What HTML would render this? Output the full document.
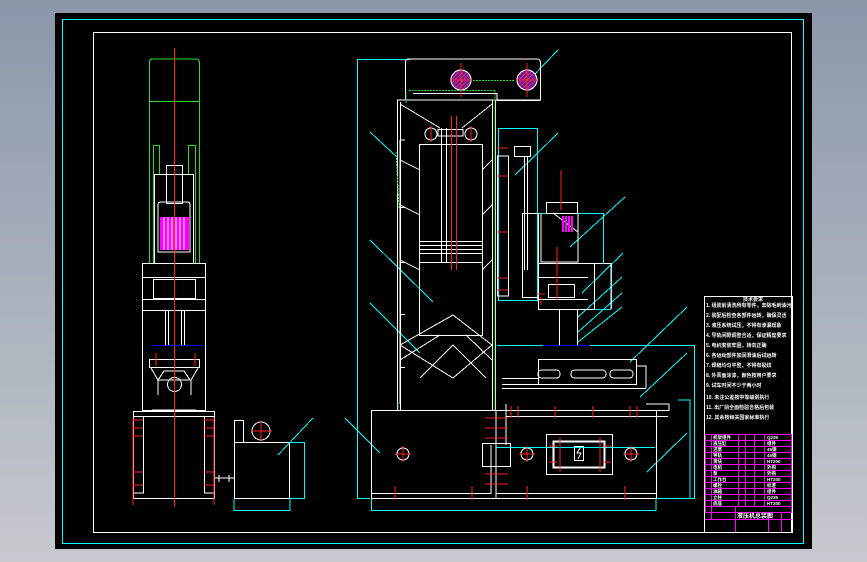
<!DOCTYPE html>
<html><head><meta charset="utf-8"><style>
html,body{margin:0;padding:0;width:867px;height:562px;overflow:hidden;background:linear-gradient(#8a97aa,#c6c9ce);}
svg{position:absolute;left:0;top:0}
</style></head><body>
<svg width="867" height="562" viewBox="0 0 867 562" xmlns="http://www.w3.org/2000/svg" fill="none" stroke-width="1" shape-rendering="crispEdges">
<defs>
<pattern id="h" width="3" height="3" patternUnits="userSpaceOnUse" patternTransform="rotate(45)">
<rect width="3" height="3" fill="#a000a0"/><path d="M0 0 V3" stroke="#30c030" stroke-width="1"/>
</pattern>
</defs>
<rect x="55" y="13" width="757" height="536" fill="#000"/>
<rect x="62.5" y="19.5" width="741" height="524" stroke="#00ffff"/>
<rect x="93.5" y="32.5" width="698" height="500" stroke="#fff"/>

<!-- LEFT VIEW -->
<g stroke="#22dd22">
<path d="M149.5 263 V62 Q149.5 59 153 59 H196 Q199.5 59 199.5 63 V263"/>
<path d="M149 101.5 H199"/>
<path d="M153.5 263 V145.5 H159.5 V175 M188.5 175 V145.5 H195.5 V263"/>
</g>
<g stroke="#fff">
<path d="M174.5 101 V143"/>
<rect x="154.5" y="174.5" width="39" height="89"/>
<rect x="166.5" y="165.5" width="16" height="38"/>
<path d="M158 216 V205 Q158 202 161 202 H187 Q190 202 190 205 V252 H158 Z"/>
<rect x="142.5" y="263.5" width="63" height="147"/>
<path d="M142 277.5 H205 M142 299.5 H205 M142 310.5 H205"/>
<rect x="153.5" y="279.5" width="42" height="19"/>
<path d="M165.5 311 V346 M168.5 311 V346 M181.5 311 V346 M184.5 311 V346"/>
<rect x="149.5" y="359.5" width="50" height="8"/>
<path d="M151 368 L158 380 V395 M198 368 L191 380 V395 M152 410 H196 M164 371 H184 L190 380 H158 Z"/>
<circle cx="174.5" cy="384.5" r="7"/>
<rect x="133.5" y="411.5" width="81" height="87"/>
<path d="M133 416.5 H214 M143.5 416 V493 H133 M204.5 416 V493 H214"/>
<rect x="234.5" y="442.5" width="55" height="56"/>
<rect x="234.5" y="420.5" width="9" height="22"/>
<circle cx="261" cy="431" r="9"/>
<path d="M215 478 H234 M219 475 V482 M229 475 V482"/>
</g>
<rect x="160" y="217" width="29" height="33" fill="#ff00ff"/>
<path d="M164 217 V250 M168 217 V250 M172 217 V250 M176 217 V250 M180 217 V250 M184 217 V250" stroke="#fff"/>
<g stroke="#ff2020">
<path d="M174.5 48 V507"/>
<path d="M252 431 H272 M261 421 V441 M133 418 V505 M214 418 V505 M156 353 V366 M195 353 V366"/>
<path d="M133 420 H143 M133 428 H143 M133 436 H143 M133 472 H143 M133 485 H143 M204 420 H214 M204 428 H214 M204 436 H214 M204 472 H214 M204 485 H214"/>
</g>
<path d="M152 345.5 H202" stroke="#0000ff"/>
<g stroke="#00ffff">
<path d="M234 498.5 V510.5 H290 V498 M290 442.5 H304.5 V498.5 H290 M278 455 L313 418"/>
</g>

<!-- RIGHT VIEW -->
<g stroke="#00ffff">
<path d="M357.5 59 V498 M357 59.5 H410 M357 498.5 H370"/>
<path d="M371.5 498 V510.5 H656 V498"/>
<rect x="498.5" y="128.5" width="39" height="172"/>
<path d="M538 213.5 H603.5 V263 M538 263.5 H611.5 V309 M555 309.5 H611"/>
<path d="M497 345.5 H694.5 V498.5 H656 M678 400 H690 V498"/>
<path d="M496 447.5 H655"/>
<path d="M558 50 L532 77 M558 133 L515 175 M625 197 L570 247 M623 253 L582 293 M622 277 L578 317 M622 293 L578 332 M622 307 L578 342 M687 307 L630 362 M687 353 L640 397 M687 433 L647 472 M345 418 L380 453 M370 240 L433 302 M370 303 L420 353 M370 132 L398 158"/>
</g>
<g stroke="#fff">
<path d="M405.5 100 V62 Q405.5 59 409 59 H537 Q540.5 59 540.5 63 V100 H405"/>
<path d="M413 93.5 H497 V100"/>
<path d="M397.5 410 V100 H407 M400.5 410 V102 M492.5 410 V100 M495.5 410 V100"/>
<path d="M497 100.5 H540"/>
<rect x="419.5" y="144.5" width="63" height="191"/>
<path d="M419 241.5 H483 M419 245.5 H483 M419 249.5 H483 M419 253.5 H483 M419 262.5 H483"/>
<path d="M441.5 128 V262 M446.5 128 V262 M438 129.5 H463 V136 H438 Z"/>
<circle cx="431" cy="134" r="6"/>
<circle cx="471" cy="134" r="6"/>
<path d="M400 104 L440 128 M492 104 L462 128 M400 160 L420 170 M492 160 L482 170 M400 205 L420 215 M492 205 L482 215 M400 260 L420 270 M492 260 L482 270 M400 345 L453 315 L492 345 L453 378 Z M420 378 L453 345 L486 378 M400 360 L440 335 M492 360 L466 335"/>
<path d="M400 140 V404 M400 140 H405 M400 207.5 H405 M400 262.5 H405 M400 314.5 H405 M400 367.5 H405"/>
<rect x="497.5" y="156" width="11" height="140"/>
<rect x="514.5" y="146.5" width="16" height="10"/>
<path d="M524.5 157 V270 M527.5 157 V270"/>
<rect x="522.5" y="213.5" width="16" height="84"/>
<rect x="546.5" y="202.5" width="31" height="11"/>
<path d="M541 213.5 V262 H578 V213 M553 213 L578 232"/>
<rect x="538.5" y="263.5" width="56" height="46"/>
<path d="M538 277.5 H588 M538 299.5 H588 M594 263.5 H611 V309"/>
<rect x="548.5" y="284.5" width="26" height="13"/>
<path d="M559.5 310 V345 M577.5 310 V345"/>
<rect x="538.5" y="359.5" width="98" height="25"/>
<path d="M502 378.5 H538 M502 384.5 H538 M502 388.5 H646 M506 410.5 H669 V404 H646 M506 416.5 H668 M506 404 V445 M636 366 H646 V388"/>
<rect x="371.5" y="410.5" width="285" height="88"/>
<path d="M371 493.5 H491 V445 M496 493.5 H656 M496 410 V498"/>
<rect x="482.5" y="443.5" width="28" height="23"/>
<rect x="546.5" y="434.5" width="66" height="40"/>
<rect x="553.5" y="441.5" width="51" height="26" stroke-width="2"/>
<rect x="574.5" y="446.5" width="9" height="14"/>
<path d="M580 448 L577 453 H581 L578 459"/>
<circle cx="403" cy="454" r="6"/>
<circle cx="527" cy="454" r="6"/>
<circle cx="631" cy="454" r="6"/>
<path d="M542 370 H556 Q560 370 560 374 Q560 378 556 378 H542 Q538 378 538 374 Q538 370 542 370 Z M575 370 H602 Q606 370 606 374 Q606 378 602 378 H575 Q571 378 571 374 Q571 370 575 370 Z M614 370 H629 Q633 370 633 374 Q633 378 629 378 H614 Q610 378 610 374 Q610 370 614 370 Z"/>
</g>
<g stroke="#22dd22" stroke-dasharray="2 1">
<path d="M406 92 V103 M409 90.5 H495 M495 90.5 V410 M473 80.5 H515 M396 152 L399 208 M398 403 V410"/>
</g>
<g fill="url(#h)" stroke="#fff">
<circle cx="461" cy="80" r="10"/>
<circle cx="527" cy="80" r="10"/>
</g>
<path d="M563 216 V232 M566 216 V232 M569 216 V232 M572 216 V232" stroke="#ff00ff" stroke-width="2"/>
<g stroke="#ff2020">
<path d="M461 63 V97 M451 80 H471 M527 63 V97 M517 80 H537 M451.5 116 V270 M456.5 116 V270 M431 126 V142 M471 126 V142 M561 170 V210 M557 247 V300"/>
<path d="M395 454 H411 M403 446 V462 M519 454 H535 M527 446 V462 M623 454 H639 M631 446 V462"/>
<path d="M511 406 V418 M518 406 V418 M555 406 V418 M593 406 V418 M630 406 V418 M637 406 V418"/>
<path d="M485 418 H508 M485 428 H508 M485 438 H508 M485 474 H508 M485 484 H508 M560 437 V472 M600 437 V472 M549 446 H557 M549 462 H557 M603 446 H611 M603 462 H611"/>
<path d="M395 486 V500 M472 486 V500 M527 486 V500 M625 486 V500 M541 297 V305 M538 294 H545"/>
<path d="M497 148 H508 M497 176 H508 M497 232 H508 M497 278 H508 M497 290 H508"/>
</g>
<path d="M543 345.5 H590" stroke="#0000ff"/>

<!-- notes / title block -->
<rect x="704.5" y="296.5" width="88" height="236" stroke="#fff"/>
<g fill="#fff" font-family="'Liberation Sans','Noto Sans CJK SC',sans-serif" font-size="5" font-weight="bold">
<text x="743" y="301">技术要求</text>
<text x="706" y="307">1. 组装前清洗所有零件，去除毛刺油污</text>
<text x="706" y="317">2. 装配后检查各部件运转，确保灵活</text>
<text x="706" y="327">3. 液压系统试压，不得有渗漏现象</text>
<text x="706" y="337">4. 导轨间隙调整合适，保证精度要求</text>
<text x="706" y="347">5. 电机安装牢固，转向正确</text>
<text x="706" y="357">6. 各运动部件加润滑油后试运转</text>
<text x="706" y="367">7. 焊缝均匀平整，不得有裂纹</text>
<text x="706" y="377">8. 外表面涂漆，颜色按用户要求</text>
<text x="706" y="387">9. 试车时间不少于两小时</text>
<text x="706" y="399">10. 未注公差按中等级别执行</text>
<text x="706" y="409">11. 出厂前全面检验合格后包装</text>
<text x="706" y="419">12. 其余按相关国家标准执行</text>
</g>
<g stroke="#ff00ff">
<rect x="705.5" y="434.5" width="86" height="78"/>
<path d="M705 440.5 H792 M705 446.5 H792 M705 452.5 H792 M705 458.5 H792 M705 464.5 H792 M705 470.5 H792 M705 476.5 H792 M705 482.5 H792 M705 488.5 H792 M705 494.5 H792 M705 500.5 H792 M705 506.5 H792"/>
<path d="M711.5 434 V519 M738.5 434 V506 M745.5 434 V506 M754.5 434 V506 M764.5 434 V506 M735.5 506 V532 M768.5 512 V532 M781.5 512 V532 M705 519.5 H792"/>
</g>
<g fill="#fff" font-family="'Liberation Sans','Noto Sans CJK SC',sans-serif" font-size="4.5" font-weight="bold">
<text x="713" y="439">机架组件</text><text x="767" y="439">Q235</text>
<text x="713" y="445">液压缸</text><text x="767" y="445">组件</text>
<text x="713" y="451">活塞</text><text x="767" y="451">45钢</text>
<text x="713" y="457">导轨</text><text x="767" y="457">45钢</text>
<text x="713" y="463">滑块</text><text x="767" y="463">HT200</text>
<text x="713" y="469">电机</text><text x="767" y="469">外购</text>
<text x="713" y="475">泵</text><text x="767" y="475">外购</text>
<text x="713" y="481">工作台</text><text x="767" y="481">HT200</text>
<text x="713" y="487">螺栓</text><text x="767" y="487">标准</text>
<text x="713" y="493">油箱</text><text x="767" y="493">组件</text>
<text x="713" y="499">立柱</text><text x="767" y="499">Q235</text>
<text x="713" y="505">底座</text><text x="767" y="505">HT200</text>
<text x="737" y="518" font-size="6">液压机总装图</text>
</g>
</svg>
</body></html>
